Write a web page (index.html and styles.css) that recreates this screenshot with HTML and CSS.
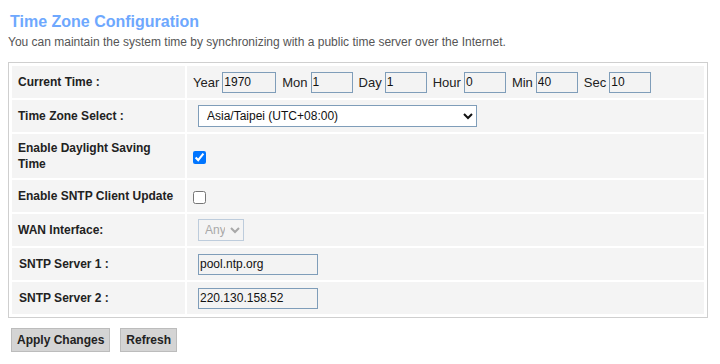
FILE: index.html
```html
<!DOCTYPE html>
<html lang="en">
<head>
  <meta charset="UTF-8" />
  <title>Time Zone Configuration</title>
  <link rel="stylesheet" href="styles.css">
</head>
<body>
  <h2 class="page-title">Time Zone Configuration</h2>
  <p class="page-desc">You can maintain the system time by synchronizing with a public time server over the Internet.</p>

  <div class="panel">
    <table class="cfg">
      <tr>
        <td class="label">Current Time :</td>
        <td class="value">
          <div class="time-row">
            <span class="unit">Year</span><input type="text" class="box year" value="1970" />
            <span class="unit">Mon</span><input type="text" class="box" value="1" />
            <span class="unit">Day</span><input type="text" class="box" value="1" />
            <span class="unit">Hour</span><input type="text" class="box" value="0" />
            <span class="unit">Min</span><input type="text" class="box" value="40" />
            <span class="unit">Sec</span><input type="text" class="box" value="10" />
          </div>
        </td>
      </tr>
      <tr>
        <td class="label">Time Zone Select :</td>
        <td class="value">
          <select class="tz">
            <option>Asia/Taipei (UTC+08:00)</option>
          </select>
        </td>
      </tr>
      <tr>
        <td class="label">Enable Daylight Saving Time</td>
        <td class="value"><input type="checkbox" class="check" checked /></td>
      </tr>
      <tr>
        <td class="label">Enable SNTP Client Update</td>
        <td class="value"><input type="checkbox" class="check" /></td>
      </tr>
      <tr>
        <td class="label">WAN Interface:</td>
        <td class="value">
          <select class="wan" disabled>
            <option>Any</option>
          </select>
        </td>
      </tr>
      <tr>
        <td class="label indent">SNTP Server 1 :</td>
        <td class="value"><input type="text" class="box server" value="pool.ntp.org" /></td>
      </tr>
      <tr>
        <td class="label indent">SNTP Server 2 :</td>
        <td class="value"><input type="text" class="box server" value="220.130.158.52" /></td>
      </tr>
    </table>
  </div>

  <div class="actions">
    <button class="btn">Apply Changes</button>
    <button class="btn">Refresh</button>
  </div>
</body>
</html>
```

FILE: styles.css
```css
body {
  margin: 8px;
  font-family: "Liberation Sans", Arial, sans-serif;
  color: #222;
  background-color: #fff;
}

.page-title {
  margin: 4px 0 0 2px;
  font-size: 16px;
  line-height: 20px;
  font-weight: bold;
  color: #6ea8fe;
}

.page-desc {
  margin: 3px 0 0 0;
  font-size: 12px;
  line-height: 14px;
  color: #555;
}

.panel {
  width: 700px;
  box-sizing: border-box;
  margin-top: 13px;
  border: 1px solid #cfcfcf;
  padding: 1px;
}

.cfg {
  width: 100%;
  border-collapse: separate;
  border-spacing: 2px;
}

.cfg tr {
  height: 32px;
}

.cfg td {
  background-color: #f4f4f4;
  vertical-align: middle;
}

.cfg .label {
  width: 173px;
  box-sizing: border-box;
  padding: 6px 6px;
  font-size: 12px;
  line-height: 16px;
  font-weight: bold;
  color: #222;
}

.cfg .label.indent {
  padding-left: 7px;
}

.cfg .value {
  padding: 0 6px;
  font-size: 13px;
}

.time-row {
  display: flex;
  align-items: center;
}

.unit {
  margin-right: 3px;
  color: #222;
}

.box {
  width: 42px;
  height: 21px;
  box-sizing: border-box;
  margin: 0 6px 0 0;
  padding: 0 1px;
  border: 1px solid #7f9db9;
  background-color: #f3f3f3;
  font-family: "Liberation Sans", Arial, sans-serif;
  font-size: 12px;
  color: #111;
  outline: none;
}

.box.year {
  width: 54px;
}

.box.server {
  width: 120px;
  margin-left: 5px;
}

.tz {
  width: 279px;
  height: 22px;
  margin-left: 5px;
  padding: 0 4px;
  border: 1px solid #7f9db9;
  background-color: #fff;
  font-family: "Liberation Sans", Arial, sans-serif;
  font-size: 12px;
  color: #111;
}

.wan {
  width: 46px;
  height: 22px;
  margin-left: 5px;
  padding: 0 2px;
  border: 1px solid #a7bcd3;
  background-color: #f4f4f4;
  font-family: "Liberation Sans", Arial, sans-serif;
  font-size: 12px;
  color: #888;
}

.check {
  width: 13px;
  height: 13px;
  margin: 0;
  vertical-align: middle;
}

.actions {
  display: flex;
  gap: 10px;
  margin: 10px 0 0 3px;
}

.btn {
  height: 24px;
  padding: 0 5px;
  border: 1px solid #bcbcbc;
  background-color: #d4d4d4;
  font-family: "Liberation Sans", Arial, sans-serif;
  font-size: 12px;
  font-weight: bold;
  color: #222;
}
```
